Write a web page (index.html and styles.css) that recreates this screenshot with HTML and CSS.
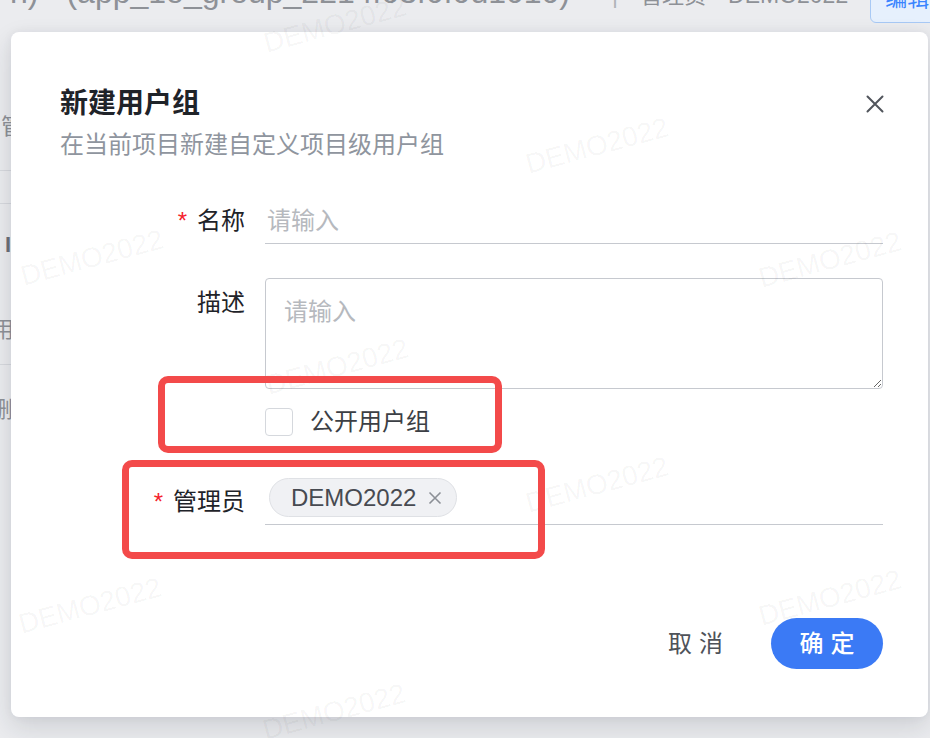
FILE: index.html
```html
<!DOCTYPE html>
<html lang="zh-CN">
<head>
<meta charset="utf-8">
<title>新建用户组</title>
<link rel="stylesheet" href="styles.css">
</head>
<body>
<div class="page">
  <div class="page-head">
    <span class="ph-a">n)</span>
    <span class="ph-id">(app_1o_group_2214f03f0f0d1010)</span>
    <span class="ph-sep">|</span>
    <span class="ph-owner">管理员</span>
    <span class="ph-user">DEMO2022</span>
    <span class="ph-btn">编辑</span>
  </div>
  <div class="page-list">
    <div class="pl-row pl-r1"><span class="pl-t pl-t1">管</span></div>
    <div class="pl-row pl-r2"></div>
    <div class="pl-row pl-r3"><span class="pl-t pl-t3">I</span></div>
    <div class="pl-row pl-r4"><span class="pl-t pl-t4">用</span></div>
    <div class="pl-row pl-r5"><span class="pl-t pl-t5">删</span></div>
  </div>
</div>

<div class="modal">
  <div class="modal-head">
    <div class="title">新建用户组</div>
    <svg class="close" width="18" height="18" viewBox="0 0 18 18"><path d="M1.5 1.5 L16.5 16.5 M16.5 1.5 L1.5 16.5" stroke="#51555c" stroke-width="2" fill="none" stroke-linecap="round"/></svg>
  </div>
  <div class="subtitle">在当前项目新建自定义项目级用户组</div>

  <div class="row row-name">
    <div class="label"><span class="req">*</span>名称</div>
    <div class="input">请输入</div>
  </div>

  <div class="row row-desc">
    <div class="label label-top">描述</div>
    <textarea class="textarea" placeholder="请输入"></textarea>
  </div>

  <div class="row row-check">
    <div></div>
    <div class="check"><span class="check-box"></span><span class="check-text">公开用户组</span></div>
  </div>

  <div class="row row-admin">
    <div class="label label-admin"><span class="req">*</span>管理员</div>
    <div class="select">
      <span class="tag">DEMO2022<svg class="tag-x" width="14" height="14" viewBox="0 0 14 14"><path d="M1.5 1.5 L12.5 12.5 M12.5 1.5 L1.5 12.5" stroke="#8b8f96" stroke-width="1.6" fill="none"/></svg></span>
    </div>
  </div>

  <div class="footer">
    <span class="btn-cancel">取消</span>
    <span class="btn-ok">确定</span>
  </div>
</div>

<div class="wm" style="left:335px;top:25px">DEMO2022</div>
<div class="wm" style="left:597px;top:146px">DEMO2022</div>
<div class="wm" style="left:92px;top:258px">DEMO2022</div>
<div class="wm" style="left:830px;top:260px">DEMO2022</div>
<div class="wm" style="left:337px;top:367px">DEMO2022</div>
<div class="wm" style="left:597px;top:485px">DEMO2022</div>
<div class="wm" style="left:90px;top:606px">DEMO2022</div>
<div class="wm" style="left:830px;top:598px">DEMO2022</div>
<div class="wm" style="left:334px;top:712px">DEMO2022</div>

<div class="annot annot-1"></div>
<div class="annot annot-2"></div>
</body>
</html>
```

FILE: styles.css
```css
* { box-sizing: border-box; }
html, body {
  margin: 0;
  width: 930px;
  height: 738px;
  overflow: hidden;
}
body {
  position: relative;
  background: #ebecef;
  font-family: "Liberation Sans", "Noto Sans CJK SC", sans-serif;
  color: #1f2329;
}

/* background page */
.page {
  color: #8e9197;
}
.page-head {
  display: flex;
  align-items: baseline;
  margin-top: -26px;
  height: 50px;
  white-space: nowrap;
}
.ph-a { font-size: 32px; line-height: 36px; margin-left: 10px; }
.ph-id { font-size: 32px; line-height: 36px; margin-left: 28px; }
.ph-sep { font-size: 23px; margin-left: 42px; color: #b0b3b8; }
.ph-owner { font-size: 22px; margin-left: 22px; }
.ph-user { font-size: 23px; margin-left: 22px; }
.ph-btn {
  margin-left: 22px;
  font-size: 22px;
  color: #3a84ff;
  background: #e6f0fd;
  border: 1px solid #a8c9f5;
  border-radius: 6px;
  padding: 5px 14px 0;
  height: 49px;
  align-self: flex-start;
}
.page-list {
  margin-top: 66px;
  width: 60px;
}
.pl-row {
  font-size: 22px;
  color: #8e9197;
  white-space: nowrap;
}
.pl-r1 { height: 81px; padding-top: 21px; border-bottom: 1px solid #d7d9de; }
.pl-r2 { height: 33px; border-bottom: 1px solid #d7d9de; }
.pl-r3 { height: 84px; padding-top: 25px; }
.pl-r4 { height: 77px; padding-top: 26px; border-bottom: 1px solid #d7d9de; }
.pl-r5 { height: 90px; padding-top: 29px; }
.pl-t { display: block; line-height: 32px; }
.pl-t1 { margin-left: 1px; }
.pl-t3 { margin-left: 5px; font-weight: 700; color: #6d7077; }
.pl-t4 { margin-left: -8px; }
.pl-t5 { margin-left: -9px; }

/* modal */
.modal {
  position: absolute;
  left: 11px;
  top: 32px;
  width: 917px;
  padding: 54px 45px 48px 49px;
  background: #fff;
  border-radius: 8px;
  box-shadow: 0 10px 26px rgba(30, 35, 50, 0.14), 0 0 10px rgba(30, 35, 50, 0.05);
  display: flex;
  flex-direction: column;
}
.modal-head {
  display: flex;
  justify-content: space-between;
  align-items: center;
  height: 36px;
}
.title {
  font-size: 28px;
  line-height: 36px;
  font-weight: 700;
  color: #1f2329;
}
.close { margin-right: -1px; display: block; }
.subtitle {
  margin-top: 7px;
  font-size: 24px;
  line-height: 32px;
  color: #8f959e;
}

.row {
  display: grid;
  grid-template-columns: 185px 618px;
  column-gap: 20px;
}
.label {
  text-align: right;
  font-size: 24px;
  line-height: 46px;
  color: #1f2329;
  white-space: nowrap;
}
.req {
  color: #f5222d;
  margin-right: 10px;
}
.row-name { margin-top: 37px; }
.input {
  height: 46px;
  border-bottom: 1px solid #c6c9cf;
  font-size: 24px;
  line-height: 46px;
  color: #b6b9be;
  padding-left: 2px;
}

.row-desc { margin-top: 34px; }
.label-top { padding-top: 9px; line-height: 32px; }
.textarea {
  display: block;
  width: 618px;
  height: 111px;
  margin: 0;
  padding: 17px 18px;
  border: 1px solid #c6c9cf;
  border-radius: 4px;
  font-family: inherit;
  font-size: 24px;
  line-height: 32px;
  color: #1f2329;
  background: #fff;
  outline: none;
}
.textarea::placeholder { color: #b6b9be; }

.row-check { margin-top: 19px; }
.check {
  display: flex;
  align-items: center;
  gap: 17px;
  height: 28px;
}
.check-box {
  width: 28px;
  height: 28px;
  border: 1.5px solid #d5d8dd;
  border-radius: 4px;
  background: #fff;
}
.check-text {
  font-size: 24px;
  line-height: 28px;
  color: #3c3f45;
}

.row-admin { margin-top: 37px; }
.label-admin { padding-top: 13px; line-height: 32px; }
.select {
  height: 52px;
  border-bottom: 1px solid #c6c9cf;
  padding: 5px 0 0 4px;
  display: flex;
  align-items: flex-start;
}
.tag {
  display: inline-flex;
  align-items: center;
  gap: 12px;
  height: 39px;
  padding: 0 14px 0 21px;
  border: 1px solid #dfe1e5;
  border-radius: 20px;
  background: #f0f1f4;
  font-size: 24px;
  line-height: 37px;
  color: #474a51;
}
.tag-x { display: block; }

.footer {
  margin-top: 93px;
  display: flex;
  justify-content: flex-end;
  align-items: center;
  gap: 21px;
}
.btn-cancel {
  padding: 0 20px;
  font-size: 24px;
  line-height: 51px;
  letter-spacing: 7px;
  color: #4e5259;
}
.btn-ok {
  width: 112px;
  height: 51px;
  border-radius: 26px;
  background: #3b7af5;
  color: #fff;
  font-size: 24px;
  font-weight: 500;
  letter-spacing: 7px;
  line-height: 51px;
  text-align: center;
  padding-left: 7px;
}

/* watermark */
.wm {
  position: absolute;
  transform: translate(-50%, -50%) rotate(-15deg);
  font-size: 28px;
  line-height: 32px;
  color: rgba(0, 0, 0, 0.045);
  white-space: nowrap;
  pointer-events: none;
}

/* annotation boxes */
.annot {
  position: absolute;
  border: 7px solid #f34a4a;
  border-radius: 10px;
  pointer-events: none;
}
.annot-1 { left: 158px; top: 376px; width: 344px; height: 77px; }
.annot-2 { left: 122px; top: 460px; width: 423px; height: 99px; }
```
